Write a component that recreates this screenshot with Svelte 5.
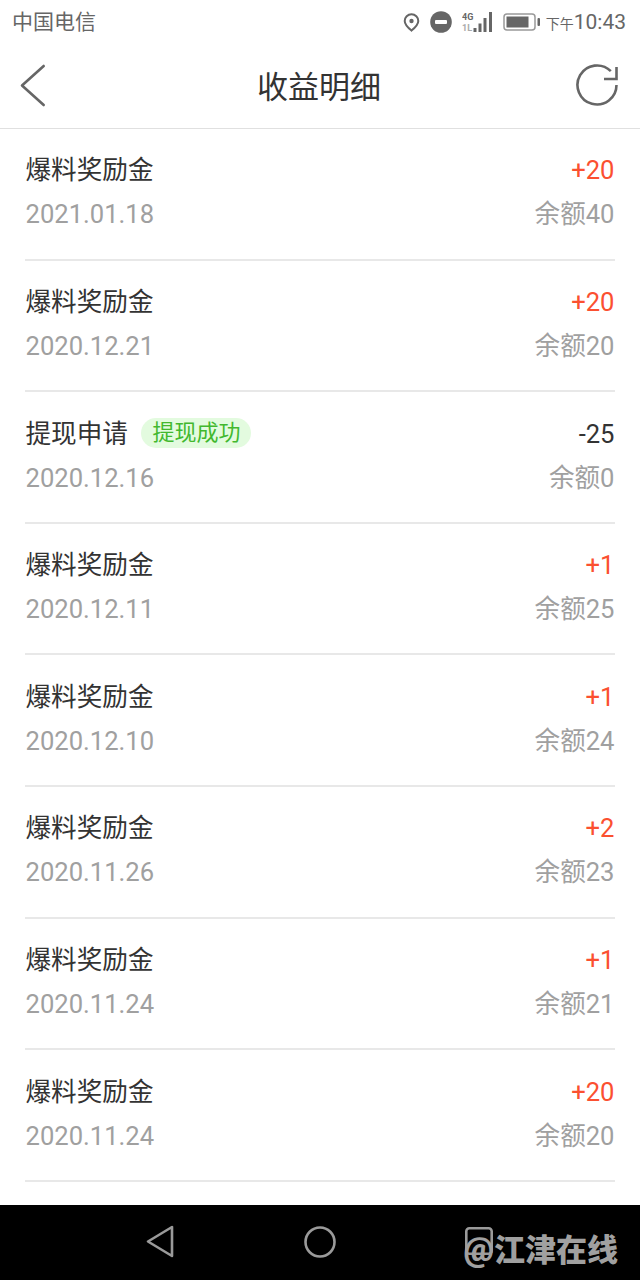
<script>
  const rows = [
    { title: '爆料奖励金', date: '2021.01.18', amount: '+20', balance: '余额40' },
    { title: '爆料奖励金', date: '2020.12.21', amount: '+20', balance: '余额20' },
    { title: '提现申请', tag: '提现成功', date: '2020.12.16', amount: '-25', balance: '余额0' },
    { title: '爆料奖励金', date: '2020.12.11', amount: '+1', balance: '余额25' },
    { title: '爆料奖励金', date: '2020.12.10', amount: '+1', balance: '余额24' },
    { title: '爆料奖励金', date: '2020.11.26', amount: '+2', balance: '余额23' },
    { title: '爆料奖励金', date: '2020.11.24', amount: '+1', balance: '余额21' },
    { title: '爆料奖励金', date: '2020.11.24', amount: '+20', balance: '余额20' }
  ];
</script>

<div class="page">
  <div class="status">
    <span class="carrier">中国电信</span>
    <div class="status-right">
      <svg class="pin" width="17" height="19" viewBox="0 0 17 19">
        <path d="M8.500 1.200a6.800 6.800 0 0 0-6.800 6.800c0 4 6.800 9.600 6.800 9.600s6.800-5.600 6.800-9.600a6.800 6.800 0 0 0-6.800-6.800z" fill="none" stroke="#666" stroke-width="2"/>
        <circle cx="8.500" cy="8" r="2.200" fill="#666"/>
      </svg>
      <svg class="dnd" width="22" height="22" viewBox="0 0 22 22">
        <circle cx="11" cy="11" r="10.800" fill="#666"/>
        <rect x="5" y="9" width="12" height="4" rx="1" fill="#fff"/>
      </svg>
      <svg class="signal" width="31" height="22" viewBox="0 0 31 22">
        <text x="0" y="8.500" class="net">4G</text>
        <text x="0" y="19.500" class="net faint">1L</text>
        <rect x="11.500" y="17" width="3" height="4" fill="#666"/>
        <rect x="16.500" y="12.500" width="3" height="8.500" fill="#666"/>
        <rect x="21.500" y="7" width="3" height="14" fill="#666"/>
        <rect x="27" y="1" width="3" height="20" fill="#666"/>
      </svg>
      <svg class="battery" width="37" height="18" viewBox="0 0 37 18">
        <rect x="1" y="1" width="31" height="16" rx="3" fill="none" stroke="#999" stroke-width="1.500"/>
        <rect x="3.500" y="3.500" width="22" height="11" fill="#666"/>
        <rect x="34.500" y="5" width="2.500" height="8" rx="1" fill="#666"/>
      </svg>
      <span class="clock"><small>下午</small>10:43</span>
    </div>
  </div>

  <header class="top">
    <svg class="back" width="26" height="44" viewBox="0 0 26 44">
      <path d="M23.700 2 2 21.500 23.700 41" fill="none" stroke="#666" stroke-width="2.600" stroke-linecap="round" stroke-linejoin="round"/>
    </svg>
    <h1>收益明细</h1>
    <svg class="refresh" width="44" height="44" viewBox="0 0 44 44">
      <path d="M40.500 21A19.500 19.500 0 1 1 34.800 7.200" fill="none" stroke="#666" stroke-width="2.600"/>
      <path d="M40.500 3v12H28" fill="none" stroke="#666" stroke-width="2.600"/>
    </svg>
  </header>

  <ul class="list">
    {#each rows as r}
      <li class="row">
        <div class="line">
          <span class="title">{r.title}</span>
          {#if r.tag}<span class="tag">{r.tag}</span>{/if}
          <span class="amount" class:minus={r.amount.startsWith('-')}>{r.amount}</span>
        </div>
        <div class="line sub">
          <span>{r.date}</span>
          <span class="balance">{r.balance}</span>
        </div>
      </li>
    {/each}
  </ul>

  <nav class="nav">
    <svg class="nav-back" width="28" height="33" viewBox="0 0 28 33">
      <path d="M26 2v29L2 16.500z" fill="none" stroke="#9a9a9a" stroke-width="2.600" stroke-linejoin="round"/>
    </svg>
    <svg class="nav-home" width="32" height="32" viewBox="0 0 32 32">
      <circle cx="16" cy="16" r="14.500" fill="none" stroke="#9a9a9a" stroke-width="2.600"/>
    </svg>
    <svg class="nav-recent" width="28" height="28" viewBox="0 0 28 28">
      <rect x="1.300" y="1.300" width="25.400" height="25.400" rx="3" fill="none" stroke="#9a9a9a" stroke-width="2.600"/>
    </svg>
    <span class="mark"><span class="at">@</span>江津在线</span>
  </nav>
</div>

<style>
  :global(body) {
    margin: 0;
    background: #fff;
  }
  .page {
    width: 640px;
    height: 1280px;
    display: flex;
    flex-direction: column;
    overflow: hidden;
    font-family: Roboto, "Noto Sans CJK SC", sans-serif;
    background: #fff;
  }
  .status {
    height: 44px;
    flex: none;
    display: flex;
    align-items: center;
    justify-content: space-between;
    padding: 0 14px 0 12px;
    color: #666;
  }
  .carrier {
    font-size: 21px;
    margin-bottom: 5px;
  }
  .status-right {
    display: flex;
    align-items: center;
  }
  .pin {
    margin-right: 10px;
  }
  .dnd {
    margin-right: 10px;
  }
  .signal {
    margin-right: 10px;
  }
  .net {
    font-size: 9px;
    font-weight: 700;
    fill: #666;
  }
  .faint {
    fill: #aaa;
  }
  .battery {
    margin-right: 6px;
  }
  .clock {
    font-size: 21px;
  }
  .clock small {
    font-size: 14px;
  }
  .top {
    height: 85px;
    flex: none;
    box-sizing: border-box;
    border-bottom: 1px solid #e0e0e0;
    display: flex;
    align-items: center;
    justify-content: space-between;
    padding: 0 20px 0 20px;
    position: relative;
  }
  .top h1 {
    position: absolute;
    left: 0;
    right: 0;
    margin: -3px 0 0;
    padding-right: 2px;
    text-align: center;
    font-size: 31px;
    font-weight: 400;
    color: #333;
  }
  .list {
    list-style: none;
    margin: 0;
    padding: 0 25px;
    flex: 1;
  }
  .row {
    height: 131.600px;
    box-sizing: border-box;
    border-bottom: 2px solid #e8e8e8;
    padding: 21.400px 0.500px 0;
  }
  .line {
    display: flex;
    align-items: baseline;
    height: 40px;
    line-height: 40px;
  }
  .sub {
    margin-top: 4px;
    justify-content: space-between;
    font-size: 25.600px;
    color: #a0a0a0;
  }
  .title {
    font-size: 25.600px;
    color: #333;
  }
  .tag {
    align-self: center;
    margin: -2px 0 0 13.500px;
    height: 30px;
    line-height: 30px;
    padding: 0 11px;
    border-radius: 15px;
    background: #e3fbdf;
    color: #42b82e;
    font-size: 22px;
  }
  .amount {
    margin-left: auto;
    font-size: 25.600px;
    color: #fb5030;
  }
  .minus {
    color: #333;
  }
  .nav {
    height: 75px;
    flex: none;
    background: #000;
    position: relative;
    display: flex;
    align-items: center;
  }
  .nav-back {
    margin-left: 146px;
    margin-top: -2px;
  }
  .nav-home {
    margin-left: 130px;
    margin-top: -2px;
  }
  .nav-recent {
    margin-left: 129px;
    margin-top: -4px;
  }
  .mark {
    position: absolute;
    right: 22px;
    top: 24px;
    font-size: 31px;
    line-height: 40px;
    font-weight: 900;
    color: #a0a0a0;
  }
  .at {
    font-size: 34px;
  }
</style>
